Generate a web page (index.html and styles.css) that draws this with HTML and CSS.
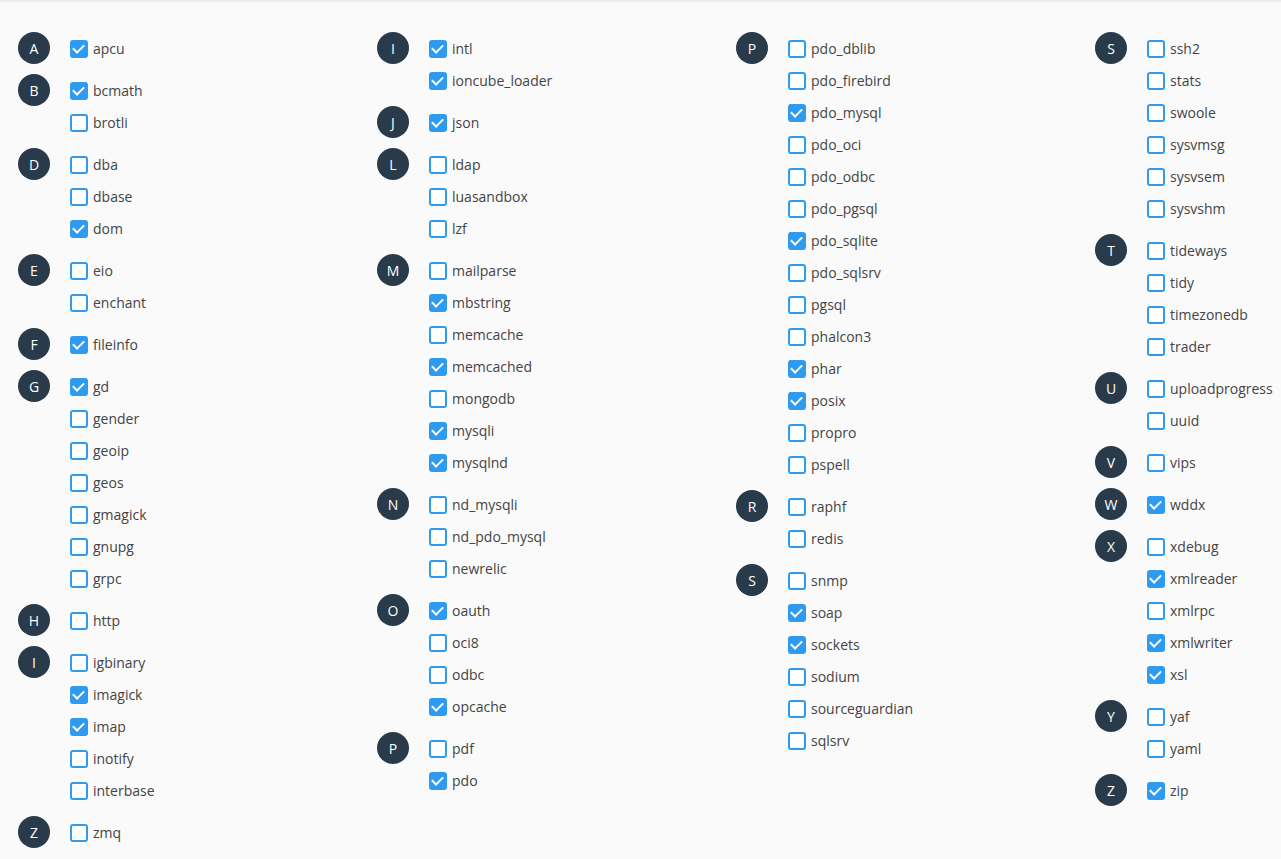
FILE: index.html
```html
<!DOCTYPE html>
<html lang="en">
<head>
  <meta charset="UTF-8" />
  <meta name="viewport" content="width=device-width, initial-scale=1.0"/>
  <title>PHP Extensions</title>
  <link rel="stylesheet" href="styles.css">
</head>
<body>
  <div class="topbar"></div>
  <div class="columns" id="columns"></div>

  <script>
    // letter, then extensions; a leading * means enabled
    const columns = [
      [
        ['A', ['*apcu']],
        ['B', ['*bcmath', 'brotli']],
        ['D', ['dba', 'dbase', '*dom']],
        ['E', ['eio', 'enchant']],
        ['F', ['*fileinfo']],
        ['G', ['*gd', 'gender', 'geoip', 'geos', 'gmagick', 'gnupg', 'grpc']],
        ['H', ['http']],
        ['I', ['igbinary', '*imagick', '*imap', 'inotify', 'interbase']],
        ['Z', ['zmq']]
      ],
      [
        ['I', ['*intl', '*ioncube_loader']],
        ['J', ['*json']],
        ['L', ['ldap', 'luasandbox', 'lzf']],
        ['M', ['mailparse', '*mbstring', 'memcache', '*memcached', 'mongodb', '*mysqli', '*mysqlnd']],
        ['N', ['nd_mysqli', 'nd_pdo_mysql', 'newrelic']],
        ['O', ['*oauth', 'oci8', 'odbc', '*opcache']],
        ['P', ['pdf', '*pdo']]
      ],
      [
        ['P', ['pdo_dblib', 'pdo_firebird', '*pdo_mysql', 'pdo_oci', 'pdo_odbc', 'pdo_pgsql', '*pdo_sqlite', 'pdo_sqlsrv', 'pgsql', 'phalcon3', '*phar', '*posix', 'propro', 'pspell']],
        ['R', ['raphf', 'redis']],
        ['S', ['snmp', '*soap', '*sockets', 'sodium', 'sourceguardian', 'sqlsrv']]
      ],
      [
        ['S', ['ssh2', 'stats', 'swoole', 'sysvmsg', 'sysvsem', 'sysvshm']],
        ['T', ['tideways', 'tidy', 'timezonedb', 'trader']],
        ['U', ['uploadprogress', 'uuid']],
        ['V', ['vips']],
        ['W', ['*wddx']],
        ['X', ['xdebug', '*xmlreader', 'xmlrpc', '*xmlwriter', '*xsl']],
        ['Y', ['yaf', 'yaml']],
        ['Z', ['*zip']]
      ]
    ];

    const root = document.getElementById('columns');
    let html = '';
    columns.forEach(col => {
      html += '<div class="column">';
      col.forEach(([letter, items]) => {
        html += '<div class="group"><span class="badge">' + letter + '</span><ul class="ext-list">';
        items.forEach(item => {
          const on = item[0] === '*';
          const name = on ? item.slice(1) : item;
          html += '<li><label class="ext"><input type="checkbox"' + (on ? ' checked' : '') +
                  '><span class="box"></span>' + name + '</label></li>';
        });
        html += '</ul></div>';
      });
      html += '</div>';
    });
    root.innerHTML = html;
  </script>
</body>
</html>
```

FILE: styles.css
```css
* {
  box-sizing: border-box;
}

body {
  margin: 0;
  background: #fafafa;
  font-family: 'Open Sans', 'Liberation Sans', sans-serif;
  font-size: 14px;
  color: #444;
  overflow: hidden;
}

.topbar {
  height: 2px;
  background: #ececec;
}

.columns {
  display: grid;
  grid-template-columns: repeat(3, 359px) 1fr;
  padding: 30px 0 0 18px;
}

.group {
  display: flex;
  align-items: flex-start;
  margin-bottom: 10px;
}

.badge {
  flex: none;
  width: 32px;
  height: 32px;
  border-radius: 50%;
  background: #293a4a;
  color: #fff;
  display: flex;
  align-items: center;
  justify-content: center;
  font-size: 14px;
  margin-right: 20px;
}

.ext-list {
  list-style: none;
  margin: 0;
  padding: 0;
}

.ext {
  display: flex;
  align-items: center;
  height: 32px;
  cursor: pointer;
  white-space: nowrap;
}

.ext input {
  display: none;
}

.box {
  flex: none;
  width: 18px;
  height: 18px;
  border: 2px solid #2e9bf0;
  border-radius: 3px;
  background: #fff;
  margin: 2px 5px 0 0;
  position: relative;
}

.ext input:checked + .box {
  background: #2e9bf0;
}

.ext input:checked + .box::after {
  content: '';
  position: absolute;
  left: 3px;
  top: 0px;
  width: 5px;
  height: 9px;
  border: solid #fff;
  border-width: 0 2px 2px 0;
  transform: rotate(45deg);
}
```
